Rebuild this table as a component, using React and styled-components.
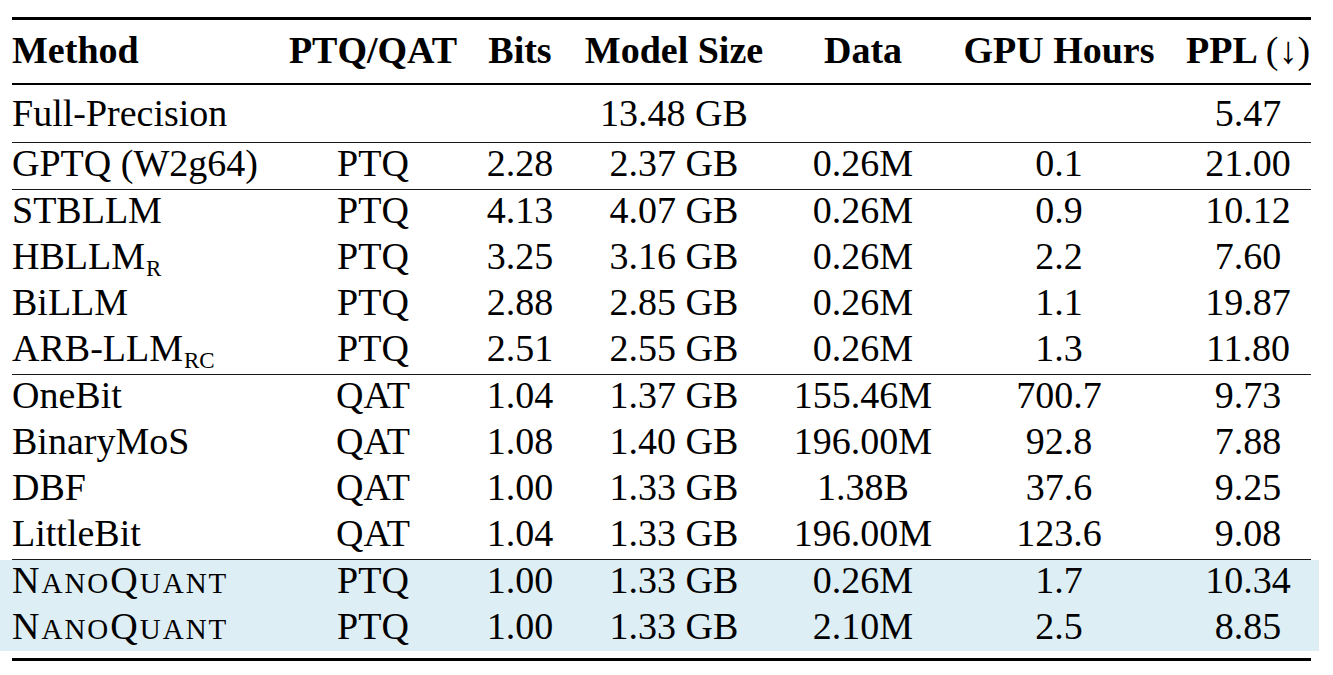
import React from "react";
import styled, { createGlobalStyle } from "styled-components";

const GlobalStyle = createGlobalStyle`
  html, body { margin: 0; padding: 0; background: #ffffff; }
  body { font-family: "Liberation Serif", "Times New Roman", serif; color: #000; }
`;

const Page = styled.div`
  width: 1333px;
  height: 675px;
  box-sizing: border-box;
  padding: 17px 22px 0 12px;
  overflow: hidden;
`;

const Table = styled.div`
  width: 1299px;
  display: flex;
  flex-direction: column;
`;

const Rule = styled.div`
  height: ${(p) => p.$h}px;
  background: ${(p) => (p.$h > 1 ? "#000" : "#1a1a1a")};
`;

const Spacer = styled.div`
  height: ${(p) => p.$h}px;
`;

const Row = styled.div`
  display: grid;
  grid-template-columns: 249px 224px 70px 238px 140px 252px 126px;
  box-sizing: border-box;
  height: ${(p) => p.$h || 46}px;
  padding-top: ${(p) => p.$pt || 0}px;
  font-size: 38px;
  line-height: 40px;
  font-weight: ${(p) => (p.$head ? 700 : 400)};
  align-items: start;
`;

const HighlightRow = styled(Row)`
  background: #ddeef5;
  margin: 0 -8px 0 -12px;
  padding-left: 12px;
  padding-right: 8px;
  grid-template-columns: 249px 224px 70px 238px 140px 252px 126px 8px;
`;

const Cell = styled.div`
  display: flex;
  justify-content: ${(p) => (p.$left ? "flex-start" : "center")};
  white-space: nowrap;
`;

const Text = styled.span`
  display: inline-block;
  white-space: nowrap;
`;

const Sub = styled.span`
  font-size: 23px;
  line-height: 1;
  vertical-align: -7px;
  margin-left: 1px;
`;

const Arrow = styled.span`
  font-weight: 400;
  margin-left: 8px;
`;

const SmallCaps = styled.span`
  letter-spacing: 2px;
`;

const Sc = styled.span`
  font-size: 29px;
`;

const NanoQuant = () => (
  <SmallCaps>
    N<Sc>ANO</Sc>Q<Sc>UANT</Sc>
  </SmallCaps>
);

const ptqRows = [
  ["STBLLM", null, "PTQ", "4.13", "4.07 GB", "0.26M", "0.9", "10.12"],
  ["HBLLM", "R", "PTQ", "3.25", "3.16 GB", "0.26M", "2.2", "7.60"],
  ["BiLLM", null, "PTQ", "2.88", "2.85 GB", "0.26M", "1.1", "19.87"],
  ["ARB-LLM", "RC", "PTQ", "2.51", "2.55 GB", "0.26M", "1.3", "11.80"],
];

const qatRows = [
  ["OneBit", null, "QAT", "1.04", "1.37 GB", "155.46M", "700.7", "9.73"],
  ["BinaryMoS", null, "QAT", "1.08", "1.40 GB", "196.00M", "92.8", "7.88"],
  ["DBF", null, "QAT", "1.00", "1.33 GB", "1.38B", "37.6", "9.25"],
  ["LittleBit", null, "QAT", "1.04", "1.33 GB", "196.00M", "123.6", "9.08"],
];

const oursRows = [
  ["PTQ", "1.00", "1.33 GB", "0.26M", "1.7", "10.34"],
  ["PTQ", "1.00", "1.33 GB", "2.10M", "2.5", "8.85"],
];

const DataRow = ({ r }) => (
  <Row>
    <Cell $left>
      <Text>
        {r[0]}
        {r[1] && <Sub>{r[1]}</Sub>}
      </Text>
    </Cell>
    {r.slice(2).map((v, i) => (
      <Cell key={i}>{v}</Cell>
    ))}
  </Row>
);

export default function App() {
  return (
    <>
      <GlobalStyle />
      <Page>
        <Table>
          <Rule $h={3} />
          <Row $head $h={63} $pt={10}>
            <Cell $left>Method</Cell>
            <Cell>PTQ/QAT</Cell>
            <Cell>Bits</Cell>
            <Cell>Model Size</Cell>
            <Cell>Data</Cell>
            <Cell>GPU Hours</Cell>
            <Cell>
              <Text>
                PPL<Arrow>(↓)</Arrow>
              </Text>
            </Cell>
          </Row>
          <Rule $h={2} />
          <Row $h={57} $pt={8}>
            <Cell $left>Full-Precision</Cell>
            <Cell />
            <Cell />
            <Cell>13.48 GB</Cell>
            <Cell />
            <Cell />
            <Cell>5.47</Cell>
          </Row>
          <Rule $h={1} />
          <Row>
            <Cell $left>GPTQ (W2g64)</Cell>
            <Cell>PTQ</Cell>
            <Cell>2.28</Cell>
            <Cell>2.37 GB</Cell>
            <Cell>0.26M</Cell>
            <Cell>0.1</Cell>
            <Cell>21.00</Cell>
          </Row>
          <Rule $h={1} />
          {ptqRows.map((r) => (
            <DataRow key={r[0]} r={r} />
          ))}
          <Rule $h={1} />
          {qatRows.map((r) => (
            <DataRow key={r[0]} r={r} />
          ))}
          <Rule $h={1} />
          {oursRows.map((r, i) => (
            <HighlightRow key={i} $h={45.5}>
              <Cell $left>
                <Text>
                  <NanoQuant />
                </Text>
              </Cell>
              {r.map((v, j) => (
                <Cell key={j}>{v}</Cell>
              ))}
              <Cell />
            </HighlightRow>
          ))}
          <Spacer $h={7} />
          <Rule $h={3} />
        </Table>
      </Page>
    </>
  );
}
